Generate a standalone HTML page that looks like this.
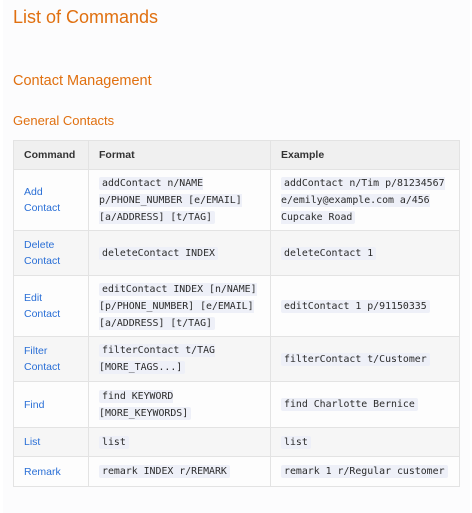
<!DOCTYPE html>
<html><head><meta charset="utf-8"><style>
html,body{margin:0;padding:0;background:#fff;}
body{width:472px;height:513px;overflow:hidden;font-family:"Liberation Sans","DejaVu Sans",sans-serif;}
.panel{position:absolute;left:3px;top:0;width:467px;height:513px;background:#fcfcfd;}
h1,h2,h3{position:absolute;margin:0;font-weight:normal;color:#e07010;left:13px;white-space:nowrap;}
h1{top:7px;font-size:18px;}
h2{top:73px;font-size:14.5px;}
h3{top:113px;font-size:13px;}
table{position:absolute;left:13px;top:140px;width:447px;border-collapse:collapse;font-size:10.5px;}
td,th{border:1px solid #e3e3e3;padding:0 10px;vertical-align:middle;text-align:left;}
th{background:#f0f0f0;height:28px;font-weight:bold;color:#333;font-size:10.5px;}
td{color:#2a6fd6;line-height:16px;}
tr.a td{background:#f6f6f6;}
tr.b td{background:#fdfdfd;}
code{font-family:"DejaVu Sans Mono","Liberation Mono",monospace;font-size:9.9px;color:#2b2b2b;background:#eef0f8;padding:1px 3px;line-height:16px;border-radius:2px;}
</style></head><body>
<div class="panel"></div>
<h1>List of Commands</h1>
<h2>Contact Management</h2>
<h3>General Contacts</h3>
<table>
<colgroup><col style="width:75px"><col style="width:182px"><col></colgroup>
<tr><th>Command</th><th>Format</th><th>Example</th></tr>
<tr class="b" style="height:61px"><td>Add<br>Contact</td><td><code>addContact n/NAME p/PHONE_NUMBER [e/EMAIL] [a/ADDRESS] [t/TAG]</code></td><td><code>addContact n/Tim p/81234567 e/emily@example.com a/456 Cupcake Road</code></td></tr>
<tr class="a" style="height:45px"><td>Delete<br>Contact</td><td><code>deleteContact INDEX</code></td><td><code>deleteContact 1</code></td></tr>
<tr class="b" style="height:61px"><td>Edit<br>Contact</td><td><code>editContact INDEX [n/NAME] [p/PHONE_NUMBER] [e/EMAIL] [a/ADDRESS] [t/TAG]</code></td><td><code>editContact 1 p/91150335</code></td></tr>
<tr class="a" style="height:45px"><td>Filter<br>Contact</td><td><code>filterContact t/TAG [MORE_TAGS...]</code></td><td><code>filterContact t/Customer</code></td></tr>
<tr class="b" style="height:46px"><td>Find</td><td><code>find KEYWORD [MORE_KEYWORDS]</code></td><td><code>find Charlotte Bernice</code></td></tr>
<tr class="a" style="height:29px"><td>List</td><td><code>list</code></td><td><code>list</code></td></tr>
<tr class="b" style="height:30px"><td>Remark</td><td><code>remark INDEX r/REMARK</code></td><td><code>remark 1 r/Regular customer</code></td></tr>
</table>
</body></html>
